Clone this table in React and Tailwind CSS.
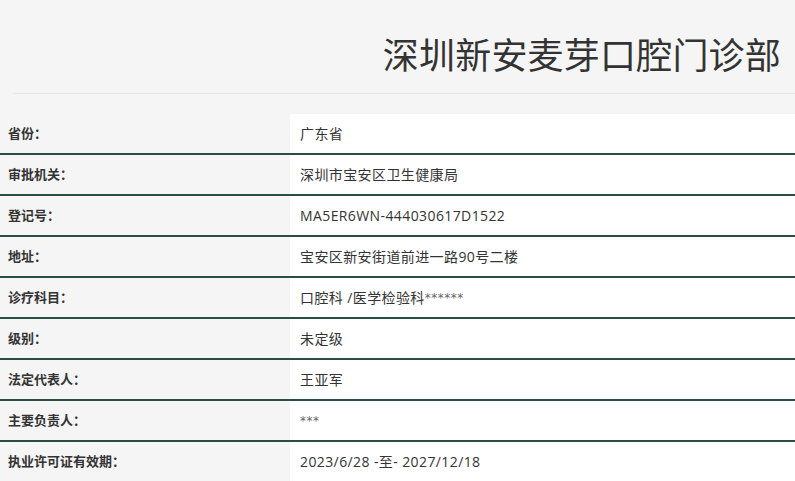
import React from 'react';

const rows = [
    ['省份：', '广东省'],
    ['审批机关：', '深圳市宝安区卫生健康局'],
    ['登记号：', 'MA5ER6WN-444030617D1522'],
    ['地址：', '宝安区新安街道前进一路90号二楼'],
    ['诊疗科目：', '口腔科 /医学检验科', '******'],
    ['级别：', '未定级'],
    ['法定代表人：', '王亚军'],
    ['主要负责人：', '', '***'],
    ['执业许可证有效期：', '2023/6/28 -至- 2027/12/18'],
];

export default function App() {
    return (
        <div className="h-[481px] w-[795px] overflow-hidden bg-[#f5f5f5] text-[#333]" style={{ fontFamily: '"Open Sans", "Noto Sans CJK SC", sans-serif' }}>
            <div className="flex h-[93px] items-center justify-end pr-[14px] pt-[18px]">
                <h1 className="text-[36px] font-normal leading-none tracking-[0.2px] text-[#333]">深圳新安麦芽口腔门诊部</h1>
            </div>
            <div className="ml-[13px] border-t border-[#e6e6e6]" />
            <div className="mt-[20px]">
                {rows.map(([label, value, stars], i) => (
                    <div key={i} className="grid h-[41px] grid-cols-[290px_1fr] border-b-2 border-[#2a4f40]">
                        <div className="flex items-center pl-[8px] text-[13px] font-bold text-[#333]">{label}</div>
                        <div className="flex items-center bg-white pl-[10px] text-[14px] tracking-[0.4px] text-[#333]">
                            {value}
                            {stars && <span className="text-[12px] tracking-[0.5px] text-[#666]" style={{ fontFamily: '"DejaVu Sans", sans-serif' }}>{stars}</span>}
                        </div>
                    </div>
                ))}
            </div>
        </div>
    );
}
